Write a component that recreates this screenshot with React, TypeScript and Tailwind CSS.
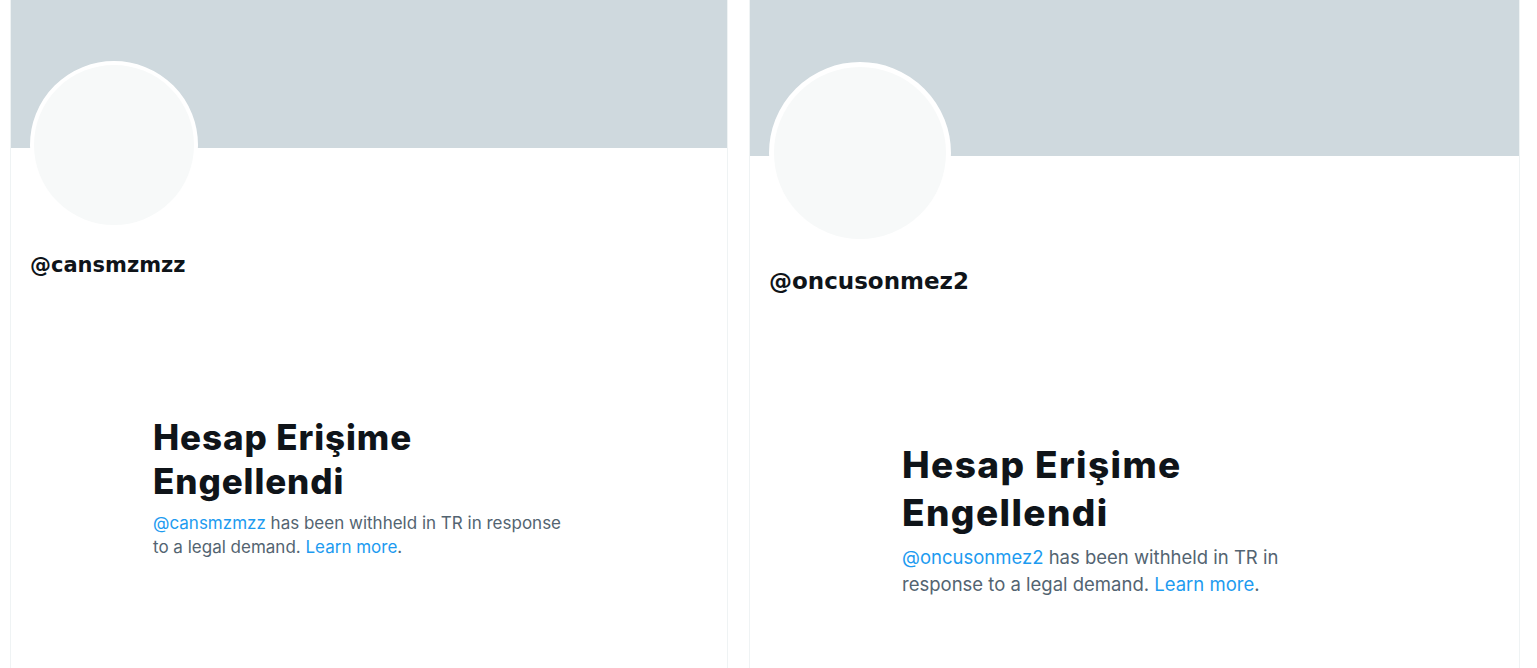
import React from "react";

const Withheld = ({ handle, big }: { handle: string; big?: boolean }) => {
  return (
    <div
      className={
        big
          ? "flex-1 min-h-[668px] border-x border-[#eff3f4] bg-white flex flex-col"
          : "w-[718px] min-h-[668px] border-x border-[#eff3f4] bg-white flex flex-col"
      }
    >
      <div className={big ? "h-[156px] bg-[#cfd9de]" : "h-[148px] bg-[#cfd9de]"} />
      <div className={big ? "pl-[19px] -mt-[94px]" : "pl-[19px] -mt-[87px]"}>
        <div
          className={
            big
              ? "w-[182px] h-[182px] rounded-full border-[5px] border-white bg-[#f7f9f9]"
              : "w-[168px] h-[168px] rounded-full border-4 border-white bg-[#f7f9f9]"
          }
        />
        <div
          className={
            big
              ? "mt-[24px] text-[23px] leading-[26px] font-bold text-[#0f1419] font-['DejaVu_Sans',sans-serif]"
              : "mt-[24px] text-[21px] leading-[24px] font-bold text-[#0f1419] font-['DejaVu_Sans',sans-serif]"
          }
        >
          @{handle}
        </div>
      </div>
      <div
        className={
          big
            ? "ml-[152px] mt-[147px] max-w-[445px] font-['Inter',sans-serif]"
            : "ml-[142px] mt-[138px] max-w-[418px] font-['Inter',sans-serif]"
        }
      >
        <h1
          className={
            big
              ? "text-[37px] leading-[48px] font-extrabold text-[#0f1419] tracking-[1.4px]"
              : "text-[35px] leading-[44px] font-extrabold text-[#0f1419] tracking-[0.9px]"
          }
        >
          Hesap Erişime Engellendi
        </h1>
        <p
          className={
            big
              ? "mt-[7px] text-[18.5px] leading-[27px] text-[#536471]"
              : "mt-[8px] text-[17px] leading-[24px] text-[#536471]"
          }
        >
          <span className="text-[#1d9bf0]">@{handle}</span> has been withheld
          in TR in response to a legal demand.{" "}
          <span className="text-[#1d9bf0]">Learn more</span>.
        </p>
      </div>
    </div>
  );
};

export default function App() {
  return (
    <div className="w-[1537px] h-[668px] overflow-hidden bg-white flex pl-[10px] pr-[17px] gap-[21px]">
      <Withheld handle="cansmzmzz" />
      <Withheld handle="oncusonmez2" big />
    </div>
  );
}
